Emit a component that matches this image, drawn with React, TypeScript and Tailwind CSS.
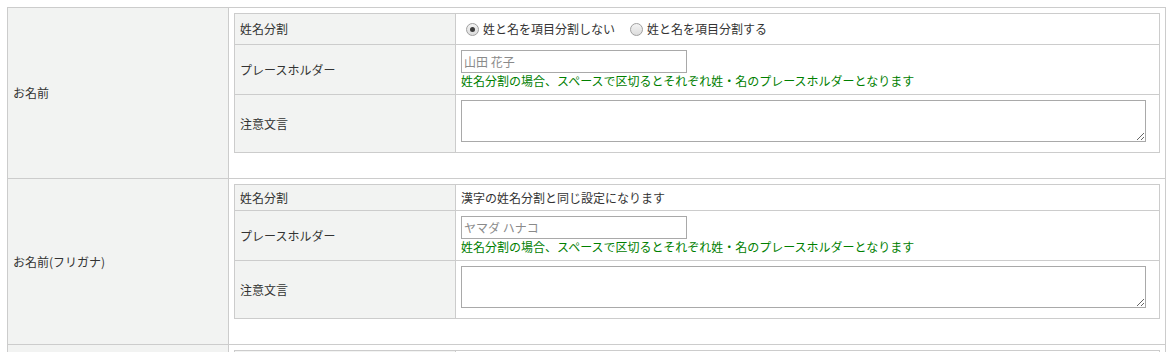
import React from "react";

const font = {fontFamily: '"Noto Sans CJK JP", "Noto Sans", sans-serif'};

function Radio({checked}: {checked?: boolean}) {
    return (
        <span className="ml-[5px] mr-[4px] inline-flex h-[13px] w-[13px] shrink-0 items-center justify-center rounded-full border border-[#a0a0a0] bg-gradient-to-b from-[#f4f4f4] to-[#dcdcdc]">
            {checked && <span className="h-[5px] w-[5px] rounded-full bg-[#3c3c3c]"></span>}
        </span>
    );
}

function SubRow({label, children, height, last, top}: {label: string; children?: React.ReactNode; height: string; last?: boolean; top?: boolean}) {
    return (
        <div className={`flex ${height} ${last ? "" : "border-b border-[#cccccc]"}`}>
            <div className="flex w-[221px] shrink-0 items-center border-r border-[#cccccc] bg-[#f2f3f2] px-[5px]">
                {label}
            </div>
            <div className={`flex flex-1 flex-col px-[5px] ${top ? "justify-start pt-[5px]" : "justify-center"}`}>
                {children}
            </div>
        </div>
    );
}

function PlaceholderCell({placeholder}: {placeholder: string}) {
    return (
        <div className="flex flex-col items-start">
            <input
                type="text"
                placeholder={placeholder}
                className="h-[23px] w-[226px] border border-[#a9a9a9] bg-white px-[2px] text-[12px] outline-none placeholder:text-[#8a8a8a]"
                style={font}
            />
            <p className="leading-[16px] text-[#008000]">
                姓名分割の場合、スペースで区切るとそれぞれ姓・名のプレースホルダーとなります
            </p>
        </div>
    );
}

function NoteCell() {
    return (
        <textarea
            className="block h-[42px] w-[685px] border border-[#a9a9a9] bg-white"
            style={font}
        ></textarea>
    );
}

function Section({label, first, children}: {label: string; first: React.ReactNode; children?: React.ReactNode}) {
    return (
        <div className="flex border-b border-[#cccccc]">
            <div className="flex w-[221px] shrink-0 items-center border-r border-[#cccccc] bg-[#f2f3f2] px-[5px]">
                {label}
            </div>
            <div className="flex-1 px-[5px] pt-[5px] pb-[25px]">
                <div className="border border-[#cccccc]">
                    {first}
                    <SubRow label="プレースホルダー" height="h-[50px]">
                        {children}
                    </SubRow>
                    <SubRow label="注意文言" height="h-[57px]" last top>
                        <NoteCell />
                    </SubRow>
                </div>
            </div>
        </div>
    );
}

export default function App() {
    return (
        <div className="h-[352px] overflow-hidden bg-white pl-[7px] pt-[7px] text-[12px] leading-[16px] text-[#333333]" style={font}>
            <div className="w-[1159px] border-x border-t border-[#cccccc]">
                <Section
                    label="お名前"
                    first={
                        <SubRow label="姓名分割" height="h-[31px]">
                            <div className="flex items-center">
                                <Radio checked />
                                <span>姓と名を項目分割しない</span>
                                <span className="ml-[10px]"></span>
                                <Radio />
                                <span>姓と名を項目分割する</span>
                            </div>
                        </SubRow>
                    }
                >
                    <PlaceholderCell placeholder="山田 花子" />
                </Section>
                <Section
                    label="お名前(フリガナ)"
                    first={
                        <SubRow label="姓名分割" height="h-[26px]">
                            <span>漢字の姓名分割と同じ設定になります</span>
                        </SubRow>
                    }
                >
                    <PlaceholderCell placeholder="ヤマダ ハナコ" />
                </Section>
                {/* next section, only its top edge is in view */}
                <div className="flex h-[40px]">
                    <div className="w-[221px] shrink-0 border-r border-[#cccccc] bg-[#f2f3f2]"></div>
                    <div className="flex-1 px-[5px] pt-[5px]">
                        <div className="flex h-[30px] border-x border-t border-[#cccccc]">
                            <div className="w-[221px] shrink-0 border-r border-[#cccccc] bg-[#f2f3f2]"></div>
                        </div>
                    </div>
                </div>
            </div>
        </div>
    );
}
